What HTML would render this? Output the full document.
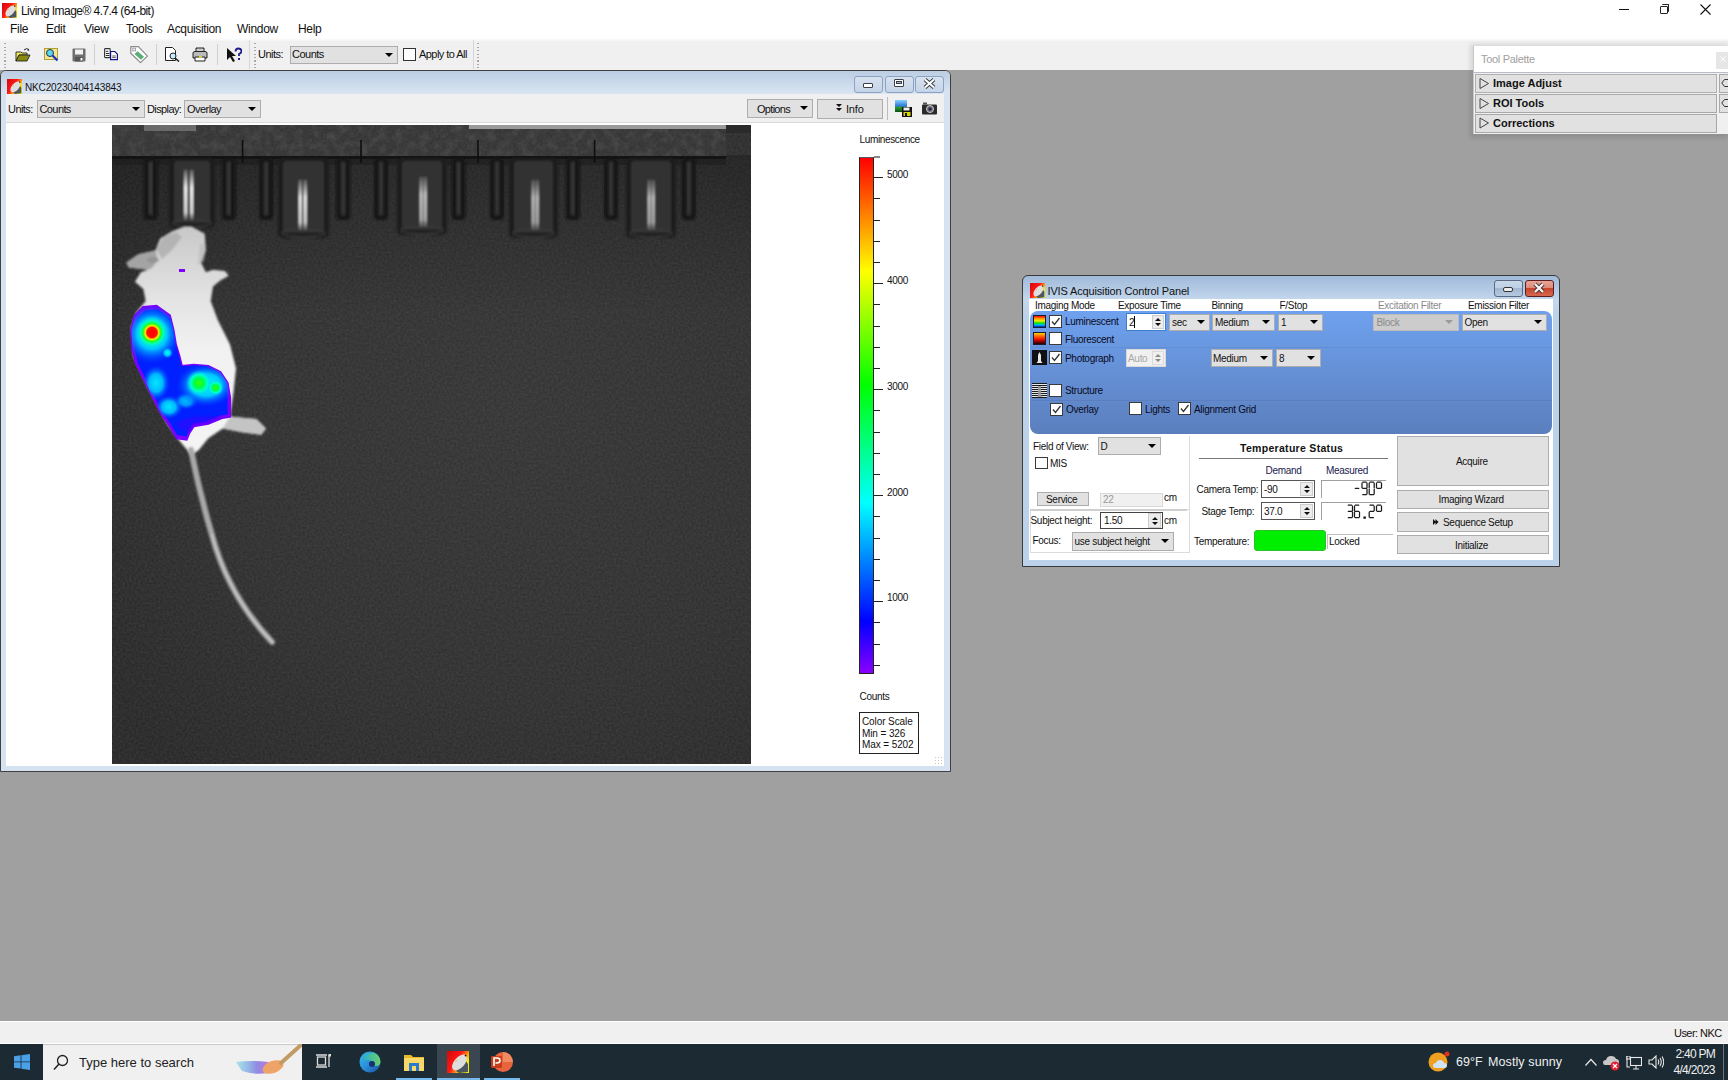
<!DOCTYPE html>
<html><head><meta charset="utf-8">
<style>
*{box-sizing:border-box;margin:0;padding:0}
html,body{width:1728px;height:1080px;overflow:hidden;background:#a0a0a0;font-family:"Liberation Sans",sans-serif;color:#000}
.a{position:absolute}
.t{position:absolute;white-space:pre;line-height:1}
.s11{font-size:11px;letter-spacing:-0.5px}
.s10{font-size:10px;letter-spacing:-0.3px}
.cb{position:absolute;background:#e1e1e1;border:1px solid #adadad}
.arr{position:absolute;width:0;height:0;border-left:4px solid transparent;border-right:4px solid transparent;border-top:4px solid #000}
.chk{position:absolute;width:13px;height:13px;background:#fff;border:1px solid #333}
.btn{position:absolute;background:#e1e1e1;border:1px solid #adadad}
</style></head><body>
<!-- ============ MAIN TITLE + MENU ============ -->
<div class="a" style="left:0;top:0;width:1728px;height:39px;background:#fff"></div>
<div class="a" style="left:0;top:38px;width:1728px;height:4px;background:linear-gradient(#fff,#f0f0f0)"></div>
<div class="a" style="left:0;top:41px;width:1728px;height:29px;background:#f0f0f0"></div>
<!-- app icon -->
<svg width="0" height="0" style="position:absolute"><defs>
<linearGradient id="lig" x1="0" y1="0.2" x2="1" y2="0.85"><stop offset="0" stop-color="#d80c0c"/><stop offset=".4" stop-color="#ff1818"/><stop offset=".62" stop-color="#ff9010"/><stop offset=".78" stop-color="#ffee00"/><stop offset="1" stop-color="#f4f000"/></linearGradient>
<symbol id="liicon" viewBox="0 0 22 22"><rect width="22" height="22" fill="url(#lig)"/><path d="M9 20 L19 10 L21 13 L21 21 L12 22Z" fill="#4e5660"/><ellipse cx="12.5" cy="11.5" rx="9.5" ry="5.2" transform="rotate(-48 12.5 11.5)" fill="#dedede"/><circle cx="18.6" cy="4.6" r="0.9" fill="#111"/><circle cx="9" cy="9.5" r="1.3" fill="#e8c890"/></symbol>
</defs></svg>
<svg class="a" style="left:2px;top:3px" width="15" height="15"><use href="#liicon"/></svg>
<div class="t" style="left:21px;top:5px;font-size:12px;letter-spacing:-0.55px;color:#111">Living Image® 4.7.4 (64-bit)</div>
<!-- window controls -->
<div class="a" style="left:1619px;top:9px;width:10px;height:1px;background:#111"></div>
<div class="a" style="left:1660px;top:6px;width:8px;height:8px;border:1px solid #222;border-radius:1px"></div>
<div class="a" style="left:1662px;top:4px;width:7px;height:8px;border-top:1px solid #222;border-right:1px solid #222;border-radius:1px"></div>
<svg class="a" style="left:1700px;top:4px" width="11" height="11"><path d="M0.5 0.5L10.5 10.5M10.5 0.5L0.5 10.5" stroke="#111" stroke-width="1.1"/></svg>
<!-- menu -->
<div class="t" style="left:10px;top:23px;font-size:12px;letter-spacing:-0.3px;color:#111">File</div>
<div class="t" style="left:46px;top:23px;font-size:12px;letter-spacing:-0.3px;color:#111">Edit</div>
<div class="t" style="left:84px;top:23px;font-size:12px;letter-spacing:-0.3px;color:#111">View</div>
<div class="t" style="left:126px;top:23px;font-size:12px;letter-spacing:-0.3px;color:#111">Tools</div>
<div class="t" style="left:167px;top:23px;font-size:12px;letter-spacing:-0.35px;color:#111">Acquisition</div>
<div class="t" style="left:237px;top:23px;font-size:12px;letter-spacing:-0.3px;color:#111">Window</div>
<div class="t" style="left:298px;top:23px;font-size:12px;letter-spacing:-0.3px;color:#111">Help</div>
<!-- toolbar grip -->
<div class="a" style="left:4px;top:43px;width:2px;height:25px;background:repeating-linear-gradient(#a8a8a8 0 1px,transparent 1px 3.5px)"></div>
<div class="a" style="left:254px;top:43px;width:2px;height:25px;background:repeating-linear-gradient(#a8a8a8 0 1px,transparent 1px 3.5px)"></div>
<div class="a" style="left:477px;top:43px;width:2px;height:25px;background:repeating-linear-gradient(#a8a8a8 0 1px,transparent 1px 3.5px)"></div>
<!-- separators -->
<div class="a" style="left:94px;top:44px;width:1px;height:21px;background:#d0d0d0"></div>
<div class="a" style="left:156px;top:44px;width:1px;height:21px;background:#d0d0d0"></div>
<div class="a" style="left:217px;top:44px;width:1px;height:21px;background:#d0d0d0"></div>
<div class="a" style="left:249px;top:40px;width:1px;height:29px;background:#d6d6d6"></div>
<div class="a" style="left:473px;top:40px;width:1px;height:29px;background:#d6d6d6"></div>
<!-- toolbar icons -->
<svg class="a" style="left:15px;top:47px" width="16" height="16" viewBox="0 0 16 16">
<path d="M1 5h5l1 1h5v2H4L1 14z" fill="#f2ec5a" stroke="#222" stroke-width=".9"/><path d="M1 14l3-6h11l-3 6z" fill="#8a8a10" stroke="#222" stroke-width=".9"/><path d="M9 3q3-3 5 0" fill="none" stroke="#222" stroke-width="1"/><path d="M13.5 1.5l.8 2-2 .2z" fill="#222"/></svg>
<svg class="a" style="left:44px;top:47px" width="15" height="15" viewBox="0 0 15 15">
<rect x=".5" y="1.5" width="13" height="11" fill="#f4e59a" stroke="#b0a030"/><circle cx="6" cy="6" r="3.5" fill="#5bd6f0" stroke="#234" stroke-width="1"/><path d="M8.5 8.5l5 5" stroke="#1535c8" stroke-width="2.2"/></svg>
<svg class="a" style="left:72px;top:48px" width="14" height="14" viewBox="0 0 14 14">
<rect x=".5" y=".5" width="13" height="13" rx="1" fill="#6e6e6e"/><rect x="3" y="1.5" width="8" height="5" fill="#f2f2f2"/><rect x="3" y="9" width="8" height="4.5" fill="#555"/><rect x="8.5" y="10" width="2" height="2.5" fill="#fff"/></svg>
<svg class="a" style="left:103px;top:47px" width="16" height="15" viewBox="103 47 16 15"><rect x="104.6" y="48.6" width="5.6" height="9" rx=".8" fill="#fff" stroke="#333" stroke-width="1.1"/><path d="M105.8 51.3h2.5M105.8 53.5h3.5M105.8 55.5h3.5" stroke="#111" stroke-width=".9"/><path d="M110.6 51.5h4.2l2.6 2.7v5.5h-6.8z" fill="#fff" stroke="#10108a" stroke-width="1.2"/><path d="M112.2 56h3.6M112.2 57.6h3.6" stroke="#333" stroke-width=".8"/></svg>
<svg class="a" style="left:129px;top:45px" width="20" height="19" viewBox="129 45 20 19"><path d="M130.8 46.6h7.6l9 9.5-6.9 6.5-9.7-9.3z" fill="#fff" stroke="#8a8a8a" stroke-width="1.2" stroke-linejoin="round"/><rect x="132.8" y="48.2" width="2.8" height="2.6" fill="none" stroke="#999" stroke-width=".9"/><path d="M137.6 51.2l6.4 5.6-3 3-6.5-5.7z" fill="#5aae78"/></svg>
<svg class="a" style="left:165px;top:47px" width="16" height="15" viewBox="0 0 16 15">
<path d="M.5 .5h7l3 3v10H.5z" fill="#fff" stroke="#222"/><circle cx="8" cy="9" r="3" fill="#bff0ff" stroke="#222" stroke-width="1"/><path d="M10 11l4 3.5" stroke="#222" stroke-width="1.6"/></svg>
<svg class="a" style="left:192px;top:47px" width="16" height="15" viewBox="0 0 16 15">
<path d="M4 1h8v4H4z" fill="#ccc" stroke="#222"/><path d="M1 6q0-1.5 2-1.5h10q2 0 2 1.5v5H1z" fill="#bbb" stroke="#222"/><path d="M3 10h10v4H3z" fill="#fff" stroke="#222"/><rect x="7" y="9" width="3" height="1.5" fill="#dde020"/></svg>
<svg class="a" style="left:226px;top:47px" width="16" height="16" viewBox="0 0 16 16">
<path d="M1 1v12l3-3 3 5 2-1-3-5h4z" fill="#111"/><path d="M9.5 4.5q0-3 3-3t3 2.5q0 2-2.5 3v2" fill="none" stroke="#1c1c8c" stroke-width="1.8"/><rect x="12" y="11" width="2" height="2" fill="#1c1c8c"/></svg>
<!-- units combo -->
<div class="t" style="left:258px;top:48.5px;font-size:11px;letter-spacing:-0.5px;color:#111">Units:</div>
<div class="cb" style="left:290px;top:46px;width:108px;height:18px"></div>
<div class="t" style="left:292px;top:48.5px;font-size:11px;letter-spacing:-0.5px;color:#111">Counts</div>
<div class="arr" style="left:385px;top:53px"></div>
<div class="chk" style="left:403px;top:48px"></div>
<div class="t" style="left:419px;top:48.5px;font-size:11px;letter-spacing:-0.55px;color:#111">Apply to All</div>
<!-- ============ STATUS + TASKBAR ============ -->
<div class="a" style="left:0;top:1021px;width:1728px;height:23px;background:#f0f0f0;border-top:1px solid #fff;border-bottom:1px solid #fff"></div>
<div class="t s11" style="left:1674px;top:1027.5px;font-size:11px;letter-spacing:-0.55px;color:#1a0f0f">User: NKC</div>
<div class="a" style="left:0;top:1044px;width:1728px;height:36px;background:#1b2a33"></div>
<svg class="a" style="left:14px;top:1054px" width="16" height="16" viewBox="0 0 16 16"><path d="M0 2.2L6.6 1.3V7.5H0zM7.4 1.2L16 0V7.5H7.4zM0 8.3H6.6V14.6L0 13.7zM7.4 8.3H16V16L7.4 14.8z" fill="#4aa0e6"/></svg>
<div class="a" style="left:43px;top:1044px;width:259px;height:36px;background:#f0f0f0;border-top:1px solid #c8c8c8"></div>
<svg class="a" style="left:53px;top:1054px" width="16" height="17" viewBox="0 0 16 17"><circle cx="9.5" cy="6.5" r="5" fill="none" stroke="#222" stroke-width="1.3"/><path d="M6 10L1 15.5" stroke="#222" stroke-width="1.5"/></svg>
<div class="t" style="left:79px;top:1056.4px;font-size:13px;letter-spacing:0px;color:#222">Type here to search</div>
<svg class="a" style="left:234px;top:1044px" width="68" height="36" viewBox="0 0 68 36">
<defs><linearGradient id="br" x1="0" y1="0" x2="1" y2="0"><stop offset="0" stop-color="#40c8e0" stop-opacity=".5"/><stop offset=".55" stop-color="#7a70e0"/><stop offset="1" stop-color="#c050d8"/></linearGradient></defs>
<path d="M2 18 Q18 16 34 18 L40 28 Q22 32 8 27Z" fill="url(#br)" opacity=".8"/>
<ellipse cx="39" cy="23" rx="11" ry="6" transform="rotate(-20 39 23)" fill="#eea466"/>
<path d="M47 19 L67 1" stroke="#c29a64" stroke-width="4" stroke-linecap="round"/>
</svg>
<!-- task view -->
<svg class="a" style="left:316px;top:1054px" width="16" height="14" viewBox="0 0 16 14"><rect x="1.5" y="3" width="8" height="8" fill="none" stroke="#ddd" stroke-width="1.3"/><path d="M0 1h11M0 13h11M13 1v12" stroke="#ddd" stroke-width="1.3"/><rect x="12.5" y="0" width="2.5" height="2.5" fill="#ddd"/></svg>
<!-- edge -->
<svg class="a" style="left:359px;top:1051px" width="22" height="22" viewBox="0 0 22 22">
<defs><linearGradient id="ed1" x1="0" y1="0" x2="1" y2="1"><stop offset="0" stop-color="#34c0e8"/><stop offset=".5" stop-color="#2a8fd8"/><stop offset="1" stop-color="#1a4fa0"/></linearGradient><linearGradient id="ed2" x1="0" y1="0" x2="1" y2="0"><stop offset="0" stop-color="#2ab0c8"/><stop offset="1" stop-color="#6ad06a"/></linearGradient></defs>
<circle cx="11" cy="11" r="10.5" fill="url(#ed1)"/><path d="M4 8Q8 1 15 2Q21 4 21.5 11Q21 15 17 15Q13 15 13 12Q13 9 9 9Q5 9 4 8Z" fill="url(#ed2)"/><circle cx="13" cy="13" r="3" fill="#1a3070"/></svg>
<!-- explorer -->
<svg class="a" style="left:404px;top:1054px" width="20" height="17" viewBox="0 0 20 17"><path d="M0 1h7l2 2h11v14H0z" fill="#e8b830"/><rect x="0" y="4" width="20" height="13" fill="#f8d868"/><path d="M5 9h10v8h-3v-5H8v5H5z" fill="#2a7ad0"/></svg>
<!-- living image active -->
<div class="a" style="left:437px;top:1044px;width:43px;height:36px;background:#3a4750"></div>
<svg class="a" style="left:447px;top:1051px" width="22" height="22"><use href="#liicon"/></svg>
<!-- powerpoint -->
<svg class="a" style="left:491px;top:1051px" width="22" height="22" viewBox="0 0 22 22"><circle cx="12" cy="11" r="10" fill="#e8643c"/><path d="M12 1A10 10 0 0 1 22 11H12z" fill="#f08a60"/><rect x="0" y="5" width="11" height="12" rx="1" fill="#c43e1c"/><path d="M3 15V7h3q3 0 3 2.5T6 12H4.5" fill="none" stroke="#fff" stroke-width="1.6"/></svg>
<div class="a" style="left:396px;top:1078px;width:36px;height:2px;background:#76b9ed"></div>
<div class="a" style="left:437px;top:1078px;width:43px;height:2px;background:#76b9ed"></div>
<div class="a" style="left:484px;top:1078px;width:36px;height:2px;background:#76b9ed"></div>
<!-- tray -->
<svg class="a" style="left:1428px;top:1051px" width="23" height="21" viewBox="0 0 23 21"><circle cx="10" cy="11" r="9.5" fill="#f0a020"/><circle cx="19" cy="3" r="2.5" fill="#e03020"/><path d="M8 17q-3 0-3-2.5t3-2.5q1-3 4-3t4 3q3 0 3 2.5T16 17z" fill="#d0e4f8"/></svg>
<div class="t" style="left:1456px;top:1056px;font-size:12.5px;letter-spacing:0px;color:#f0f0f0">69°F</div>
<div class="t" style="left:1488px;top:1056px;font-size:12.5px;letter-spacing:0.1px;color:#f0f0f0">Mostly sunny</div>
<svg class="a" style="left:1585px;top:1058px" width="12" height="8"><path d="M0.5 7.5L6 1.5 11.5 7.5" fill="none" stroke="#e8e8e8" stroke-width="1.2"/></svg>
<svg class="a" style="left:1603px;top:1054px" width="18" height="17" viewBox="0 0 18 17"><path d="M2 11q-2 0-2-2.5T3 6q1-4 5-4t5 3q3 0 3 3t-3 3z" fill="#c8c8c8"/><circle cx="12" cy="12" r="4.5" fill="#e02030"/><path d="M10 10l4 4M14 10l-4 4" stroke="#fff" stroke-width="1.2"/></svg>
<svg class="a" style="left:1626px;top:1056px" width="16" height="14" viewBox="0 0 16 14"><rect x="4.5" y="1.5" width="11" height="8" fill="none" stroke="#e8e8e8" stroke-width="1.1"/><path d="M10 10v2.5M7 13h6M1 0v11h3" fill="none" stroke="#e8e8e8" stroke-width="1.1"/><rect x="0" y="0" width="4" height="3" fill="none" stroke="#e8e8e8" stroke-width="1"/></svg>
<svg class="a" style="left:1648px;top:1055px" width="16" height="14" viewBox="0 0 16 14"><path d="M1 5h3l4-4v12l-4-4H1z" fill="none" stroke="#e8e8e8" stroke-width="1.1"/><path d="M10 4.5q1.5 2.5 0 5M12 3q2.5 4 0 8M14 1.5q3.5 5.5 0 11" fill="none" stroke="#e8e8e8" stroke-width="1.1"/></svg>
<div class="t" style="left:1675.5px;top:1048px;font-size:12px;letter-spacing:-0.75px;color:#f0f0f0">2:40 PM</div>
<div class="t" style="left:1673.5px;top:1063.6px;font-size:12px;letter-spacing:-0.7px;color:#f0f0f0">4/4/2023</div>
<div class="a" style="left:1723px;top:1044px;width:1px;height:36px;background:#6a747a"></div>
<!-- ============ IMAGE WINDOW ============ -->
<div class="a" style="left:0;top:70px;width:951px;height:702px;background:#d5e2f1;border:1px solid #404040;border-radius:6px 6px 0 0"></div>
<div class="a" style="left:1px;top:71px;width:949px;height:23px;border-radius:5px 5px 0 0;background:linear-gradient(#bccde3,#d9e5f2)"></div>
<svg class="a" style="left:7px;top:79px" width="15" height="15"><use href="#liicon"/></svg>
<div class="t" style="left:25px;top:82.8px;font-size:10px;letter-spacing:-0.15px;color:#111">NKC20230404143843</div>
<!-- caption buttons -->
<div class="a" style="left:854px;top:76px;width:29px;height:17px;border:1px solid #8da2c2;border-radius:3px;background:linear-gradient(#d7e2ef,#c5d4e8)"></div>
<div class="a" style="left:863px;top:83px;width:10px;height:5px;background:#fff;border:1px solid #3a3f48;border-radius:1px"></div>
<div class="a" style="left:885px;top:76px;width:29px;height:17px;border:1px solid #8da2c2;border-radius:3px;background:linear-gradient(#d7e2ef,#c5d4e8)"></div>
<div class="a" style="left:894px;top:79px;width:10px;height:8px;background:#fff;border:1px solid #3a3f48;border-radius:1px"></div>
<div class="a" style="left:896px;top:81px;width:6px;height:3px;background:#aab;border:1px solid #3a3f48"></div>
<div class="a" style="left:915px;top:76px;width:29px;height:17px;border:1px solid #8da2c2;border-radius:3px;background:linear-gradient(#d7e2ef,#c5d4e8)"></div>
<svg class="a" style="left:923px;top:78px" width="13" height="11"><path d="M2 1.5L11 9.5M11 1.5L2 9.5" stroke="#3a3f48" stroke-width="4"/><path d="M2 1.5L11 9.5M11 1.5L2 9.5" stroke="#fff" stroke-width="2"/></svg>
<!-- client -->
<div class="a" style="left:6px;top:94px;width:938px;height:672px;background:#fff"></div>
<div class="a" style="left:6px;top:94px;width:938px;height:29px;background:#f0f0f0;border-bottom:1px solid #dadada"></div>
<div class="t" style="left:8px;top:103.8px;font-size:11px;letter-spacing:-0.55px;color:#111">Units:</div>
<div class="cb" style="left:37px;top:100px;width:108px;height:18px"></div>
<div class="t" style="left:39.5px;top:103.8px;font-size:11px;letter-spacing:-0.6px;color:#111">Counts</div>
<div class="arr" style="left:132px;top:107px"></div>
<div class="t" style="left:147px;top:103.8px;font-size:11px;letter-spacing:-0.6px;color:#111">Display:</div>
<div class="cb" style="left:184px;top:100px;width:77px;height:18px"></div>
<div class="t" style="left:187px;top:103.8px;font-size:11px;letter-spacing:-0.55px;color:#111">Overlay</div>
<div class="arr" style="left:248px;top:107px"></div>
<div class="btn" style="left:747px;top:99px;width:66px;height:19px"></div>
<div class="t" style="left:757px;top:103.8px;font-size:11px;letter-spacing:-0.7px;color:#111">Options</div>
<div class="arr" style="left:800px;top:106px"></div>
<div class="btn" style="left:817px;top:99px;width:66px;height:20px"></div>
<svg class="a" style="left:836px;top:104px" width="6" height="9"><path d="M0 0h6L3 3zM0 4h6L3 7z" fill="#111"/></svg>
<div class="t" style="left:846px;top:103.8px;font-size:11px;letter-spacing:-0.2px;color:#111">Info</div>
<div class="a" style="left:887px;top:97px;width:1px;height:23px;background:#bbb"></div>
<svg class="a" style="left:895px;top:100px" width="18" height="18" viewBox="0 0 18 18">
<defs><linearGradient id="sky" x1="0" y1="0" x2="0" y2="1"><stop offset="0" stop-color="#8ad0ff"/><stop offset=".5" stop-color="#2a7ad8"/><stop offset=".6" stop-color="#2a9a30"/><stop offset="1" stop-color="#0c5010"/></linearGradient></defs>
<rect x="0" y="0" width="12" height="12" fill="url(#sky)"/><rect x="7" y="7" width="10" height="10" fill="#111"/><rect x="8.5" y="7.5" width="6" height="3" fill="#eee"/><rect x="8.5" y="12" width="7" height="4" fill="#d8d800"/><rect x="10" y="13" width="2" height="3" fill="#111"/></svg>
<svg class="a" style="left:922px;top:102px" width="16" height="13" viewBox="0 0 16 13">
<rect x="0" y="2.5" width="15" height="10" rx="1" fill="#2a2a2a"/><rect x="1" y="0.5" width="4" height="2" fill="#555"/><circle cx="8" cy="7" r="3.5" fill="#667" stroke="#ccc" stroke-width="1"/><circle cx="8" cy="7" r="1.5" fill="#224"/></svg>
<!-- resize grip -->
<div class="a" style="left:934px;top:756px;width:9px;height:9px;background:radial-gradient(circle,#c8c8b8 0.8px,transparent 1px) 0 0/3px 3px"></div>
<!-- IMAGE -->
<svg class="a" style="left:112px;top:125px" width="639" height="639" viewBox="0 0 639 639">
<defs>
<radialGradient id="bgg" cx="0.62" cy="0.45" r="0.75"><stop offset="0" stop-color="#2f2f2f"/><stop offset=".6" stop-color="#2a2a2a"/><stop offset="1" stop-color="#222"/></radialGradient>
<filter id="nz" x="0" y="0" width="100%" height="100%"><feTurbulence type="fractalNoise" baseFrequency="0.45" numOctaves="1" seed="3"/><feColorMatrix values="0 0 0 0 0.55  0 0 0 0 0.55  0 0 0 0 0.55  0 0 0 0.16 0"/></filter>
<filter id="bl1" x="-10%" y="-10%" width="120%" height="120%"><feGaussianBlur stdDeviation="0.8"/></filter>
<filter id="bl2" x="-20%" y="-20%" width="140%" height="140%"><feGaussianBlur stdDeviation="0.9"/></filter>
<linearGradient id="topdark" x1="0" y1="0" x2="0" y2="1"><stop offset="0" stop-color="#000" stop-opacity=".22"/><stop offset="1" stop-color="#000" stop-opacity="0"/></linearGradient><linearGradient id="peg" x1="0" y1="0" x2="1" y2="0"><stop offset="0" stop-color="#151515"/><stop offset=".35" stop-color="#333"/><stop offset=".5" stop-color="#555"/><stop offset=".65" stop-color="#303030"/><stop offset="1" stop-color="#141414"/></linearGradient>
<linearGradient id="cyl" x1="0" y1="0" x2="1" y2="0"><stop offset="0" stop-color="#1c1c1c"/><stop offset=".2" stop-color="#2a2a2a"/><stop offset=".38" stop-color="#3a3a3a"/><stop offset=".46" stop-color="#c8c8c8"/><stop offset=".52" stop-color="#e0e0e0"/><stop offset=".58" stop-color="#555"/><stop offset=".75" stop-color="#2c2c2c"/><stop offset="1" stop-color="#1a1a1a"/></linearGradient>
<linearGradient id="hl" x1="0" y1="0" x2="0" y2="1"><stop offset="0" stop-color="#fff" stop-opacity=".25"/><stop offset=".35" stop-color="#fff" stop-opacity="1"/><stop offset=".85" stop-color="#fff" stop-opacity=".85"/><stop offset="1" stop-color="#fff" stop-opacity=".15"/></linearGradient><filter id="bl3" x="-80%" y="-10%" width="260%" height="120%"><feGaussianBlur stdDeviation="0.75"/></filter><linearGradient id="cyl2" x1="0" y1="0" x2="1" y2="0"><stop offset="0" stop-color="#1e1e1e"/><stop offset=".3" stop-color="#333"/><stop offset=".45" stop-color="#777"/><stop offset=".52" stop-color="#aaa"/><stop offset=".6" stop-color="#444"/><stop offset="1" stop-color="#1c1c1c"/></linearGradient>
<radialGradient id="hot1" cx="0.5" cy="0.5" r="0.5"><stop offset="0" stop-color="#ff0000"/><stop offset=".22" stop-color="#ff2000"/><stop offset=".3" stop-color="#f0f000"/><stop offset=".42" stop-color="#00ff30"/><stop offset=".55" stop-color="#00ffd0"/><stop offset=".72" stop-color="#00a0ff"/><stop offset="1" stop-color="#0040ff" stop-opacity="0"/></radialGradient>
<radialGradient id="hot2" cx="0.5" cy="0.5" r="0.5"><stop offset="0" stop-color="#40ff00"/><stop offset=".3" stop-color="#00ff60"/><stop offset=".55" stop-color="#00f0ff"/><stop offset="1" stop-color="#0060ff" stop-opacity="0"/></radialGradient>
<radialGradient id="cy" cx="0.5" cy="0.5" r="0.5"><stop offset="0" stop-color="#00f0ff"/><stop offset="1" stop-color="#0060ff" stop-opacity="0"/></radialGradient>
</defs>
<rect width="639" height="639" fill="url(#bgg)"/>
<rect width="639" height="639" filter="url(#nz)"/>
<rect x="0" y="30" width="639" height="160" fill="url(#topdark)"/>
<!-- rack -->
<filter id="nz2" x="0" y="0" width="100%" height="100%"><feTurbulence type="fractalNoise" baseFrequency="0.12" numOctaves="2" seed="7"/><feColorMatrix values="0 0 0 0 0.6  0 0 0 0 0.6  0 0 0 0 0.6  0 0 0 0.9 -0.35"/></filter>
<rect x="0" y="0" width="614" height="32" fill="#303030"/>
<rect x="0" y="0" width="614" height="32" filter="url(#nz2)" opacity=".25"/>
<rect x="0" y="0" width="614" height="32" filter="url(#nz)" opacity=".8"/>
<rect x="32" y="0" width="52" height="6" fill="#8a8a8a" opacity=".6"/>
<rect x="357" y="0" width="257" height="4" fill="#9a9a9a"/>
<rect x="614" y="0" width="25" height="8" fill="#2a2a2a"/>
<rect x="0" y="31" width="614" height="3" fill="#141414"/>
<rect x="0" y="34" width="614" height="6" fill="#1a1a1a" opacity=".5"/>
<path d="M130.6 15v23M249 15v23M366 15v23M482.6 15v23" stroke="#0e0e0e" stroke-width="1.6"/>
<g filter="url(#bl2)"><rect x="31.6" y="33" width="14" height="62" rx="4" fill="#161616"/><rect x="36.1" y="36" width="5" height="55" rx="2" fill="#2c2c2c"/><rect x="37.9" y="38" width="1.4" height="50" fill="#3c3c3c"/><rect x="109.7" y="33" width="14" height="62" rx="4" fill="#161616"/><rect x="114.2" y="36" width="5" height="55" rx="2" fill="#2c2c2c"/><rect x="116.0" y="38" width="1.4" height="50" fill="#3c3c3c"/><rect x="147.2" y="33" width="14" height="62" rx="4" fill="#161616"/><rect x="151.7" y="36" width="5" height="55" rx="2" fill="#2c2c2c"/><rect x="153.5" y="38" width="1.4" height="50" fill="#3c3c3c"/><rect x="224.3" y="33" width="14" height="62" rx="4" fill="#161616"/><rect x="228.8" y="36" width="5" height="55" rx="2" fill="#2c2c2c"/><rect x="230.6" y="38" width="1.4" height="50" fill="#3c3c3c"/><rect x="262.0" y="33" width="14" height="62" rx="4" fill="#161616"/><rect x="266.5" y="36" width="5" height="55" rx="2" fill="#2c2c2c"/><rect x="268.3" y="38" width="1.4" height="50" fill="#3c3c3c"/><rect x="339.5" y="33" width="14" height="62" rx="4" fill="#161616"/><rect x="344.0" y="36" width="5" height="55" rx="2" fill="#2c2c2c"/><rect x="345.8" y="38" width="1.4" height="50" fill="#3c3c3c"/><rect x="378.0" y="33" width="14" height="62" rx="4" fill="#161616"/><rect x="382.5" y="36" width="5" height="55" rx="2" fill="#2c2c2c"/><rect x="384.3" y="38" width="1.4" height="50" fill="#3c3c3c"/><rect x="453.7" y="33" width="14" height="62" rx="4" fill="#161616"/><rect x="458.2" y="36" width="5" height="55" rx="2" fill="#2c2c2c"/><rect x="460.0" y="38" width="1.4" height="50" fill="#3c3c3c"/><rect x="492.0" y="33" width="14" height="62" rx="4" fill="#161616"/><rect x="496.5" y="36" width="5" height="55" rx="2" fill="#2c2c2c"/><rect x="498.3" y="38" width="1.4" height="50" fill="#3c3c3c"/><rect x="569.8" y="33" width="14" height="62" rx="4" fill="#161616"/><rect x="574.3" y="36" width="5" height="55" rx="2" fill="#2c2c2c"/><rect x="576.1" y="38" width="1.4" height="50" fill="#3c3c3c"/><rect x="57" y="33" width="46" height="70" rx="5" fill="#1e1e1e"/><rect x="62" y="36" width="36" height="62" rx="3" fill="#303030"/><ellipse cx="80.0" cy="98" rx="19.0" ry="4" fill="none" stroke="#3a3a3a" stroke-width="1.5"/><rect x="72.2" y="45" width="3" height="50" fill="url(#hl)" opacity="1" filter="url(#bl3)"/><rect x="78.2" y="45" width="3" height="50" fill="url(#hl)" opacity="1" filter="url(#bl3)"/><rect x="166" y="33" width="51" height="80" rx="5" fill="#1e1e1e"/><rect x="171" y="36" width="41" height="72" rx="3" fill="#303030"/><ellipse cx="191.5" cy="108" rx="21.5" ry="4" fill="none" stroke="#3a3a3a" stroke-width="1.5"/><rect x="186.7" y="55" width="3" height="50" fill="url(#hl)" opacity="0.95" filter="url(#bl3)"/><rect x="191.7" y="55" width="3" height="50" fill="url(#hl)" opacity="0.95" filter="url(#bl3)"/><rect x="285" y="33" width="50" height="77" rx="5" fill="#1e1e1e"/><rect x="290" y="36" width="40" height="69" rx="3" fill="#303030"/><ellipse cx="310.0" cy="105" rx="21.0" ry="4" fill="none" stroke="#3a3a3a" stroke-width="1.5"/><rect x="307.7" y="52" width="3" height="50" fill="url(#hl)" opacity="0.75" filter="url(#bl3)"/><rect x="311.7" y="52" width="3" height="50" fill="url(#hl)" opacity="0.75" filter="url(#bl3)"/><rect x="397" y="33" width="49" height="80" rx="5" fill="#1e1e1e"/><rect x="402" y="36" width="39" height="72" rx="3" fill="#303030"/><ellipse cx="421.5" cy="108" rx="20.5" ry="4" fill="none" stroke="#3a3a3a" stroke-width="1.5"/><rect x="419.7" y="55" width="3" height="50" fill="url(#hl)" opacity="0.7" filter="url(#bl3)"/><rect x="423.7" y="55" width="3" height="50" fill="url(#hl)" opacity="0.7" filter="url(#bl3)"/><rect x="514" y="33" width="50" height="80" rx="5" fill="#1e1e1e"/><rect x="519" y="36" width="40" height="72" rx="3" fill="#303030"/><ellipse cx="539.0" cy="108" rx="21.0" ry="4" fill="none" stroke="#3a3a3a" stroke-width="1.5"/><rect x="535.7" y="55" width="3" height="50" fill="url(#hl)" opacity="0.7" filter="url(#bl3)"/><rect x="539.7" y="55" width="3" height="50" fill="url(#hl)" opacity="0.7" filter="url(#bl3)"/></g>
<!-- mouse -->
<defs><linearGradient id="mb" x1="0" y1="0" x2="0" y2="1"><stop offset="0" stop-color="#c8c8c8"/><stop offset=".3" stop-color="#e2e2e2"/><stop offset=".55" stop-color="#f2f2f2"/><stop offset="1" stop-color="#f4f4f4"/></linearGradient>
<clipPath id="blobc"><path d="M19.3 205 L22.9 190.5 31.3 182.1 44.5 180.9 57.8 190.5 61.4 205 63.8 219.4 67.4 231.4 69.8 241 81.8 239.9 96.3 241 108.3 247.1 115.5 257.9 118 272.3 118 291.6 110.7 292.8 96.3 298.8 81.8 301.2 77 308.5 74.6 314.5 65 313.3 57.8 301.2 48.1 286.8 36.1 262.7 24.1 238.7 20.5 224.2Z"/></clipPath>
<radialGradient id="cyb" cx="0.5" cy="0.5" r="0.5"><stop offset="0" stop-color="#00ffff"/><stop offset=".5" stop-color="#00c8ff"/><stop offset="1" stop-color="#0040ff" stop-opacity="0"/></radialGradient></defs>
<g filter="url(#bl1)">
<path d="M79.4 101.5 L92.7 108.7 93.9 125.5 89 137.6 93.9 147.2 101 144.8 113 146 116.7 150.8 108.3 155.6 101 161.6 98.7 176 105.9 195.3 118 219.4 124 243.5 121.5 267.5 118 291.6 130 292.8 144.4 294 154 303.6 149.2 309.7 130 307.3 110.7 303.6 96.3 313.3 86.6 325.3 79.4 330 67.4 315.7 55.4 298.8 36.1 262.7 21.7 231.4 19.3 202.6 24 188 33.7 176 31.3 164 22.9 156.8 28.9 147.2 36.1 144.8 16.8 142.4 14.4 137.6 26.5 129.2 43.3 125.5 48.1 113.5 60.2 106.3 72.2 101.5Z" fill="url(#mb)"/>
<path d="M36.1 144.8 L16.8 142.4 14.4 137.6 26.5 129.2 43.3 125.5 46 135 40 143Z" fill="#a4a4a4"/>
<path d="M118 291.6 L130 292.8 144.4 294 154 303.6 149.2 309.7 130 307.3 110.7 303.6Z" fill="#c4c4c4"/>
<path d="M44 124 L52 112 64 107 70 112 60 125 50 134Z" fill="#a8a8a8" opacity=".7"/><ellipse cx="41" cy="135" rx="6" ry="3" fill="#909090" opacity=".8"/><path d="M88 118 L94 122 92 136 86 140Z" fill="#b8b8b8" opacity=".6"/>
</g>
<path d="M79 325 Q88 370 100 410 Q116 470 160 517" fill="none" stroke="#a8a8a8" stroke-width="6" stroke-linecap="round" filter="url(#bl2)"/>
<path d="M100 410 Q116 470 160 517" fill="none" stroke="#b8b8b8" stroke-width="2.5" stroke-linecap="round"/>
<!-- luminescence overlay -->
<path d="M19.3 205 L22.9 190.5 31.3 182.1 44.5 180.9 57.8 190.5 61.4 205 63.8 219.4 67.4 231.4 69.8 241 81.8 239.9 96.3 241 108.3 247.1 115.5 257.9 118 272.3 118 291.6 110.7 292.8 96.3 298.8 81.8 301.2 77 308.5 74.6 314.5 65 313.3 57.8 301.2 48.1 286.8 36.1 262.7 24.1 238.7 20.5 224.2Z" fill="#7a00ff" stroke="#7a00ff" stroke-width="2.2"/>
<g clip-path="url(#blobc)">
<path d="M19.3 205 L22.9 190.5 31.3 182.1 44.5 180.9 57.8 190.5 61.4 205 63.8 219.4 67.4 231.4 69.8 241 81.8 239.9 96.3 241 108.3 247.1 115.5 257.9 118 272.3 118 291.6 110.7 292.8 96.3 298.8 81.8 301.2 77 308.5 74.6 314.5 65 313.3 57.8 301.2 48.1 286.8 36.1 262.7 24.1 238.7 20.5 224.2Z" fill="#0020ff" transform="translate(69 248) scale(.95) translate(-69 -248)"/>
<circle cx="40" cy="209" r="30" fill="url(#cyb)"/>
<circle cx="55.4" cy="227.8" r="6" fill="url(#cyb)"/>
<ellipse cx="44" cy="258" rx="14" ry="18" fill="url(#cyb)" opacity=".9"/>
<ellipse cx="57" cy="282" rx="14" ry="12" fill="url(#cyb)" opacity=".9"/>
<ellipse cx="74" cy="276" rx="12" ry="9" fill="url(#cyb)" opacity=".7"/>
<ellipse cx="94" cy="260" rx="30" ry="22" fill="url(#cyb)"/>
<ellipse cx="95" cy="300" rx="30" ry="9" fill="#4000ff" opacity=".5" filter="url(#bl1)"/>
</g>
<defs><radialGradient id="hot1b" cx="0.5" cy="0.5" r="0.5"><stop offset="0" stop-color="#ff0000"/><stop offset=".3" stop-color="#ff1000"/><stop offset=".4" stop-color="#f8f000"/><stop offset=".52" stop-color="#20ff20"/><stop offset=".68" stop-color="#00ffc0"/><stop offset="1" stop-color="#00c0ff" stop-opacity="0"/></radialGradient>
<radialGradient id="hot2b" cx="0.5" cy="0.5" r="0.5"><stop offset="0" stop-color="#40ff00"/><stop offset=".35" stop-color="#00ff40"/><stop offset=".65" stop-color="#00ffd0"/><stop offset="1" stop-color="#00c0ff" stop-opacity="0"/></radialGradient></defs>
<circle cx="40" cy="207.5" r="17" fill="url(#hot1b)"/>
<circle cx="87" cy="258" r="13" fill="url(#hot2b)"/>
<circle cx="103.5" cy="262.7" r="8" fill="url(#hot2b)"/>
<rect x="67" y="144" width="6" height="3" fill="#8000ff"/>
</svg>
<!-- colour bar -->
<div class="t" style="left:859.5px;top:134.5px;font-size:10px;letter-spacing:-0.35px;color:#111">Luminescence</div>
<div class="a" style="left:859px;top:157px;width:15px;height:517px;border:1px solid #222;border-top-color:#556;background:linear-gradient(#ff0000 0%,#ff8000 11%,#ffff00 22%,#00ff00 44%,#00ffff 67%,#0000ff 90%,#8a00ff 100%)"></div>
<div class="a" style="left:874px;top:156px;width:6px;height:2px;background:#888"></div>
<div class="a" style="left:874px;top:177px;width:9px;height:1px;background:#222"></div>
<div class="t" style="left:887px;top:169.5px;font-size:10px;letter-spacing:-0.35px;color:#111">5000</div>
<div class="a" style="left:874px;top:198px;width:6px;height:1px;background:#222"></div>
<div class="a" style="left:874px;top:220px;width:6px;height:1px;background:#222"></div>
<div class="a" style="left:874px;top:241px;width:6px;height:1px;background:#222"></div>
<div class="a" style="left:874px;top:262px;width:6px;height:1px;background:#222"></div>
<div class="a" style="left:874px;top:283px;width:9px;height:1px;background:#222"></div>
<div class="t" style="left:887px;top:275.5px;font-size:10px;letter-spacing:-0.35px;color:#111">4000</div>
<div class="a" style="left:874px;top:304px;width:6px;height:1px;background:#222"></div>
<div class="a" style="left:874px;top:326px;width:6px;height:1px;background:#222"></div>
<div class="a" style="left:874px;top:347px;width:6px;height:1px;background:#222"></div>
<div class="a" style="left:874px;top:368px;width:6px;height:1px;background:#222"></div>
<div class="a" style="left:874px;top:389px;width:9px;height:1px;background:#222"></div>
<div class="t" style="left:887px;top:381.5px;font-size:10px;letter-spacing:-0.35px;color:#111">3000</div>
<div class="a" style="left:874px;top:410px;width:6px;height:1px;background:#222"></div>
<div class="a" style="left:874px;top:432px;width:6px;height:1px;background:#222"></div>
<div class="a" style="left:874px;top:453px;width:6px;height:1px;background:#222"></div>
<div class="a" style="left:874px;top:474px;width:6px;height:1px;background:#222"></div>
<div class="a" style="left:874px;top:495px;width:9px;height:1px;background:#222"></div>
<div class="t" style="left:887px;top:487.5px;font-size:10px;letter-spacing:-0.35px;color:#111">2000</div>
<div class="a" style="left:874px;top:516px;width:6px;height:1px;background:#222"></div>
<div class="a" style="left:874px;top:538px;width:6px;height:1px;background:#222"></div>
<div class="a" style="left:874px;top:559px;width:6px;height:1px;background:#222"></div>
<div class="a" style="left:874px;top:580px;width:6px;height:1px;background:#222"></div>
<div class="a" style="left:874px;top:601px;width:9px;height:1px;background:#222"></div>
<div class="t" style="left:887px;top:593.4px;font-size:10px;letter-spacing:-0.35px;color:#111">1000</div>
<div class="a" style="left:874px;top:622px;width:6px;height:1px;background:#222"></div>
<div class="a" style="left:874px;top:644px;width:6px;height:1px;background:#222"></div>
<div class="a" style="left:874px;top:665px;width:6px;height:1px;background:#222"></div>
<div class="t" style="left:859.5px;top:691.5px;font-size:10px;letter-spacing:-0.3px;color:#111">Counts</div>
<div class="a" style="left:859px;top:712px;width:60px;height:42px;border:1px solid #222;background:#fff"></div>
<div class="t" style="left:862px;top:715.8px;font-size:10px;letter-spacing:-0.1px;line-height:11.7px;color:#111">Color Scale
Min = 326
Max = 5202</div>
<!-- ============ TOOL PALETTE ============ -->
<div class="a" style="left:1470px;top:44px;width:258px;height:94px;background:rgba(0,0,0,.10);filter:blur(2px)"></div>
<div class="a" style="left:1473px;top:46px;width:255px;height:88px;background:#f0f0f0;border-left:1px solid #c8c8c8"></div>
<div class="a" style="left:1474px;top:46px;width:254px;height:27px;background:#fff;border-bottom:1px solid #b8bcc4"></div>
<div class="t" style="left:1481px;top:54px;font-size:11px;letter-spacing:-0.3px;color:#a0a0a0">Tool Palette</div>
<div class="a" style="left:1716px;top:52px;width:12px;height:17px;background:#e6e6e6"></div>
<div class="a" style="left:1475px;top:74px;width:242px;height:19px;background:#e1e1e1;border:1px solid #b0b0b0"></div>
<div class="a" style="left:1475px;top:94px;width:242px;height:19px;background:#e1e1e1;border:1px solid #a8a8a8"></div>
<div class="a" style="left:1475px;top:114px;width:242px;height:19px;background:#e1e1e1;border:1px solid #a8a8a8"></div>
<div class="a" style="left:1719px;top:74px;width:9px;height:19px;background:#e1e1e1;border:1px solid #a8a8a8;border-right:none"></div>
<div class="a" style="left:1719px;top:94px;width:9px;height:19px;background:#e1e1e1;border:1px solid #a8a8a8;border-right:none"></div>
<svg class="a" style="left:1479px;top:77px" width="11" height="52"><path d="M1 1.5L9.5 6.5 1 11.5Z M1 21.5L9.5 26.5 1 31.5Z M1 41L9.5 46 1 51Z" fill="none" stroke="#444" stroke-width="1"/></svg>
<svg class="a" style="left:1721px;top:78px" width="7" height="34"><path d="M7 1.5H3.5L0.8 5 3.5 8.5H7M7 21.5H3.5L0.8 25 3.5 28.5H7" fill="none" stroke="#333" stroke-width="1"/></svg><svg class="a" style="left:1719px;top:55px" width="9" height="9"><path d="M1.5 1.5l5 5M6.5 1.5l-5 5" stroke="#fff" stroke-width="1"/></svg>
<div class="t" style="left:1493px;top:77.7px;font-size:11px;font-weight:bold;letter-spacing:0px;color:#111">Image Adjust</div>
<div class="t" style="left:1493px;top:97.8px;font-size:11px;font-weight:bold;letter-spacing:0px;color:#111">ROI Tools</div>
<div class="t" style="left:1493px;top:117.5px;font-size:11px;font-weight:bold;letter-spacing:0px;color:#111">Corrections</div>
<!-- ============ IVIS PANEL ============ -->
<div class="a" style="left:1022px;top:275px;width:538px;height:292px;border:1px solid #3a3a3a;border-radius:6px 6px 0 0;background:linear-gradient(#a0bad9 0px,#c4d7ed 24px,#bcd2ea 40px,#bcd2ea 100%)"></div>
<svg class="a" style="left:1030px;top:283px" width="15" height="15"><use href="#liicon"/></svg>
<div class="t" style="left:1047.5px;top:286.4px;font-size:11px;letter-spacing:-0.15px;color:#111">IVIS Acquisition Control Panel</div>
<div class="a" style="left:1494px;top:280px;width:29px;height:17px;border:1px solid #5a6a80;border-radius:3px;background:linear-gradient(#c9d8ea 0,#bdd0e6 45%,#9fb6d2 46%,#b6c9df 100%)"></div>
<div class="a" style="left:1503px;top:287px;width:10px;height:5px;background:#eee;border:1px solid #333;border-radius:2px"></div>
<div class="a" style="left:1525px;top:280px;width:29px;height:17px;border:1px solid #5a1e1e;border-radius:3px;background:linear-gradient(#eaa597 0,#de8a78 45%,#c6432a 46%,#d5684f 100%)"></div>
<svg class="a" style="left:1532px;top:282px" width="14" height="12"><path d="M3 2L11 10M11 2L3 10" stroke="#4a3030" stroke-width="4.2"/><path d="M3 2L11 10M11 2L3 10" stroke="#f4f4f4" stroke-width="2.4"/></svg>
<div class="a" style="left:1029px;top:299px;width:524px;height:261px;background:#fff"></div>
<div class="t s10" style="left:1035px;top:300.5px;color:#111">Imaging Mode</div>
<div class="t s10" style="left:1118px;top:300.5px;color:#111">Exposure Time</div>
<div class="t s10" style="left:1211.5px;top:300.5px;color:#111">Binning</div>
<div class="t s10" style="left:1279.5px;top:300.5px;color:#111">F/Stop</div>
<div class="t s10" style="left:1378px;top:300.5px;color:#8a8a8a">Excitation Filter</div>
<div class="t s10" style="left:1468px;top:300.5px;color:#111">Emission Filter</div>
<!-- blue panel -->
<div class="a" style="left:1030px;top:311px;width:522px;height:123px;border-radius:8px;background:linear-gradient(#6fa1ee,#5b7fbd)"></div>
<div class="a" style="left:1030px;top:347px;width:522px;height:1px;background:rgba(0,0,40,.06)"></div>
<div class="a" style="left:1030px;top:400px;width:522px;height:1px;background:rgba(0,0,40,.06)"></div>
<!-- icons -->
<div class="a" style="left:1033px;top:314.5px;width:13px;height:13px;border:1px solid #1a1a30;background:linear-gradient(#ff0000,#ffa000 25%,#f0f000 45%,#00e000 65%,#00c0ff 80%,#0020c0)"></div>
<div class="a" style="left:1033px;top:331.5px;width:13px;height:13.5px;border:1px solid #1a1a30;background:linear-gradient(#ffd000,#ff2000 50%,#a00000 75%,#200000)"></div>
<svg class="a" style="left:1032px;top:349.5px" width="15" height="15" viewBox="0 0 15 15"><rect width="15" height="15" fill="#111"/><path d="M7.5 2L9 5v6l1.5 2h-6L6 11V5z" fill="#e8e8e8"/></svg>
<svg class="a" style="left:1032px;top:383px" width="15" height="15" viewBox="0 0 15 15"><rect width="15" height="15" fill="#e8e8e8"/><path d="M0 .5h15M0 2.5h15M0 4.5h15M0 6.5h15M0 8.5h15M0 10.5h15M0 12.5h15M0 14.5h15" stroke="#1a1a1a" stroke-width="1"/><path d="M6 3h3v9l1 2H5l1-2z" fill="#999" opacity=".9"/></svg>
<!-- checkboxes -->
<div class="chk" style="left:1049px;top:315px;width:13px;height:13px;border-color:#3a3a3a"></div>
<svg class="a" style="left:1050px;top:316px" width="11" height="11"><path d="M2 5.5L4.5 8.5 9.5 2" fill="none" stroke="#333" stroke-width="1.3"/></svg>
<div class="chk" style="left:1049px;top:332px;width:13px;height:13px;border-color:#3a3a3a"></div>
<div class="chk" style="left:1049px;top:351px;width:13px;height:13px;border-color:#3a3a3a"></div>
<svg class="a" style="left:1050px;top:352px" width="11" height="11"><path d="M2 5.5L4.5 8.5 9.5 2" fill="none" stroke="#333" stroke-width="1.3"/></svg>
<div class="chk" style="left:1049px;top:384px;width:13px;height:13px;border-color:#3a3a3a"></div>
<div class="chk" style="left:1050px;top:402.5px;width:13px;height:13px;border-color:#3a3a3a"></div>
<svg class="a" style="left:1051px;top:403.5px" width="11" height="11"><path d="M2 5.5L4.5 8.5 9.5 2" fill="none" stroke="#333" stroke-width="1.3"/></svg>
<div class="chk" style="left:1129px;top:401.5px;width:13px;height:13px;border-color:#3a3a3a"></div>
<div class="chk" style="left:1178px;top:401.5px;width:13px;height:13px;border-color:#3a3a3a"></div>
<svg class="a" style="left:1179px;top:402.5px" width="11" height="11"><path d="M2 5.5L4.5 8.5 9.5 2" fill="none" stroke="#333" stroke-width="1.3"/></svg>
<div class="t s10" style="left:1065px;top:316.5px;color:#0a0a20">Luminescent</div>
<div class="t s10" style="left:1065px;top:334.5px;color:#0a0a20">Fluorescent</div>
<div class="t s10" style="left:1065px;top:353.5px;color:#0a0a20">Photograph</div>
<div class="t s10" style="left:1065px;top:385.5px;color:#0a0a20">Structure</div>
<div class="t s10" style="left:1066px;top:405px;color:#0a0a20">Overlay</div>
<div class="t s10" style="left:1145px;top:404.5px;color:#0a0a20">Lights</div>
<div class="t s10" style="left:1194px;top:404.5px;color:#0a0a20">Alignment Grid</div>
<!-- row controls -->
<div class="a" style="left:1126px;top:313px;width:40px;height:18px;background:#fff;border:1px solid #3c7fd0"></div>
<div class="t s10" style="left:1129px;top:317.5px;color:#111">2</div>
<div class="a" style="left:1134px;top:316px;width:1px;height:12px;background:#000"></div>
<div class="a" style="left:1152px;top:315px;width:12px;height:14px;background:#ececec;border:1px solid #ccc"></div>
<svg class="a" style="left:1154px;top:317px" width="8" height="10"><path d="M1 4L4 1 7 4zM1 6L4 9 7 6z" fill="#111"/></svg>
<div class="cb" style="left:1169px;top:314px;width:41px;height:17px"></div>
<div class="t s10" style="left:1172px;top:317.5px;color:#111">sec</div>
<div class="arr" style="left:1197px;top:320px"></div>
<div class="cb" style="left:1212px;top:314px;width:63px;height:17px"></div>
<div class="t s10" style="left:1215px;top:317.5px;color:#111">Medium</div>
<div class="arr" style="left:1262px;top:320px"></div>
<div class="cb" style="left:1278px;top:314px;width:45px;height:17px"></div>
<div class="t s10" style="left:1281px;top:317.5px;color:#111">1</div>
<div class="arr" style="left:1310px;top:320px"></div>
<div class="cb" style="left:1373px;top:313.5px;width:86px;height:17.5px;background:#cccccc;border-color:#bcbcbc"></div>
<div class="t s10" style="left:1376.5px;top:317.5px;color:#8a8a8a">Block</div>
<div class="arr" style="left:1445px;top:320px;border-top-color:#9a9a9a"></div>
<div class="cb" style="left:1462px;top:313.5px;width:85px;height:17.5px"></div>
<div class="t s10" style="left:1464.5px;top:317.5px;color:#111">Open</div>
<div class="arr" style="left:1534px;top:320px"></div>
<div class="a" style="left:1126px;top:349px;width:40px;height:18px;background:#f0f0f0;border:1px solid #d8d8d8"></div>
<div class="t s10" style="left:1128px;top:353.8px;color:#a8a8a8">Auto</div>
<div class="a" style="left:1152px;top:351px;width:12px;height:14px;background:#f0f0f0;border:1px solid #dadada"></div>
<svg class="a" style="left:1154px;top:353px" width="8" height="10"><path d="M1 4L4 1 7 4zM1 6L4 9 7 6z" fill="#8a8a8a"/></svg>
<div class="cb" style="left:1211px;top:349px;width:62px;height:18px"></div>
<div class="t s10" style="left:1213px;top:353.8px;color:#111">Medium</div>
<div class="arr" style="left:1260px;top:356px"></div>
<div class="cb" style="left:1276px;top:349px;width:45px;height:18px"></div>
<div class="t s10" style="left:1279px;top:353.8px;color:#111">8</div>
<div class="arr" style="left:1307px;top:356px"></div>
<!-- lower left -->
<div class="t s10" style="left:1033px;top:441.6px;color:#111">Field of View:</div>
<div class="cb" style="left:1098px;top:437px;width:63px;height:18px"></div>
<div class="t s10" style="left:1100.5px;top:441.6px;color:#111">D</div>
<div class="arr" style="left:1148px;top:444px"></div>
<div class="a" style="left:1189px;top:436px;width:1px;height:117px;background:#dcdcdc"></div>
<div class="chk" style="left:1035px;top:457px;width:13px;height:12px;border-color:#3a3a3a"></div>
<div class="t s10" style="left:1050px;top:458.6px;color:#111">MIS</div>
<div class="btn" style="left:1037px;top:492px;width:52px;height:14px"></div>
<div class="t s10" style="left:1046px;top:494.6px;color:#111">Service</div>
<div class="a" style="left:1100px;top:493px;width:63px;height:14px;background:#f0f0f0;border:1px solid #dadada"></div>
<div class="t s10" style="left:1103px;top:494.6px;color:#999">22</div>
<div class="t s10" style="left:1164px;top:492.7px;color:#111">cm</div>
<div class="a" style="left:1030px;top:509px;width:160px;height:44px;border:1px solid #dcdcdc;border-right:none"></div><div class="a" style="left:1030px;top:508.5px;width:157px;height:2px;background:#cfcfcf"></div>
<div class="t s10" style="left:1030.5px;top:516.4px;color:#111">Subject height:</div>
<div class="a" style="left:1100px;top:512px;width:63px;height:17px;background:#fff;border:1px solid #444"></div>
<div class="t s10" style="left:1104px;top:516.4px;color:#111">1.50</div>
<div class="a" style="left:1148px;top:513px;width:13px;height:15px;background:#ececec;border:1px solid #ccc"></div>
<svg class="a" style="left:1150.5px;top:515.5px" width="8" height="10"><path d="M1 4L4 1 7 4zM1 6L4 9 7 6z" fill="#111"/></svg>
<div class="t s10" style="left:1164px;top:516.4px;color:#111">cm</div>
<div class="t s10" style="left:1032.5px;top:535.6px;color:#111">Focus:</div>
<div class="cb" style="left:1072px;top:531.5px;width:102px;height:19.5px"></div>
<div class="t s10" style="left:1074.5px;top:536.6px;color:#111">use subject height</div>
<div class="arr" style="left:1161px;top:539px"></div>
<!-- temperature -->
<div class="t" style="left:1240px;top:443.2px;font-size:10.5px;font-weight:bold;letter-spacing:0.3px;color:#111">Temperature Status</div>
<div class="a" style="left:1199px;top:458px;width:189px;height:1px;background:#777"></div>
<div class="t s10" style="left:1265.5px;top:466.4px;color:#1a1a50">Demand</div>
<div class="t s10" style="left:1326px;top:466.4px;color:#1a1a50">Measured</div>
<div class="t s10" style="left:1196.5px;top:484.9px;color:#111">Camera Temp:</div>
<div class="t s10" style="left:1201.5px;top:507.2px;color:#111">Stage Temp:</div>
<div class="a" style="left:1261px;top:480px;width:54px;height:18px;background:#fff;border:1px solid #555"></div>
<div class="t s10" style="left:1264px;top:485px;color:#111">-90</div>
<div class="a" style="left:1300px;top:482px;width:13px;height:14px;background:#ececec;border:1px solid #ccc"></div>
<svg class="a" style="left:1302.5px;top:484px" width="8" height="10"><path d="M1 4L4 1 7 4zM1 6L4 9 7 6z" fill="#111"/></svg>
<div class="a" style="left:1261px;top:502px;width:54px;height:18px;background:#fff;border:1px solid #555"></div>
<div class="t s10" style="left:1264px;top:507.3px;color:#111">37.0</div>
<div class="a" style="left:1300px;top:504px;width:13px;height:14px;background:#ececec;border:1px solid #ccc"></div>
<svg class="a" style="left:1302.5px;top:506px" width="8" height="10"><path d="M1 4L4 1 7 4zM1 6L4 9 7 6z" fill="#111"/></svg>
<div class="a" style="left:1321px;top:480px;width:65px;height:18px;border-top:1px solid #a0a0a0;border-left:1px solid #a0a0a0"></div>
<div class="a" style="left:1321px;top:502px;width:65px;height:18px;border-top:1px solid #a0a0a0;border-left:1px solid #a0a0a0"></div>
<svg class="a" style="left:0;top:0;overflow:visible" width="1" height="1"><path d="M1355.3 488.4L1358.7 488.4M1362.8 482.2L1366.2 482.2M1367.0 483.0L1367.0 487.7M1367.0 489.2L1367.0 493.9M1362.8 494.7L1366.2 494.7M1362.0 483.0L1362.0 487.7M1362.8 488.4L1366.2 488.4M1370.0 482.2L1373.4 482.2M1374.2 483.0L1374.2 487.7M1374.2 489.2L1374.2 493.9M1370.0 494.7L1373.4 494.7M1369.2 489.2L1369.2 493.9M1369.2 483.0L1369.2 487.7M1377.3 482.2L1380.7 482.2M1381.5 483.0L1381.5 487.7M1376.5 483.0L1376.5 487.7M1377.3 488.4L1380.7 488.4M1348.3 505.2L1351.7 505.2M1352.5 506.0L1352.5 510.7M1352.5 512.2L1352.5 516.9M1348.3 517.7L1351.7 517.7M1348.3 511.4L1351.7 511.4M1355.3 505.2L1358.7 505.2M1359.5 512.2L1359.5 516.9M1355.3 517.7L1358.7 517.7M1354.5 512.2L1354.5 516.9M1354.5 506.0L1354.5 510.7M1355.3 511.4L1358.7 511.4M1364.0 517.2h1.3v1h-1.3zM1370.0 505.2L1373.4 505.2M1374.2 506.0L1374.2 510.7M1370.0 517.7L1373.4 517.7M1369.2 512.2L1369.2 516.9M1370.0 511.4L1373.4 511.4M1377.3 505.2L1380.7 505.2M1381.5 506.0L1381.5 510.7M1376.5 506.0L1376.5 510.7M1377.3 511.4L1380.7 511.4" stroke="#1a1a1a" stroke-width="1.25" stroke-linecap="round" fill="none"/></svg>

<div class="t s10" style="left:1194px;top:537px;color:#111">Temperature:</div>
<div class="a" style="left:1254px;top:530px;width:72px;height:20.5px;background:#00ef00;border-radius:3px;border:1px solid #2ac02a"></div>
<div class="a" style="left:1327px;top:534px;width:66px;height:15px;border-top:1px solid #c0c0c0;border-left:1px solid #c0c0c0"></div>
<div class="t s10" style="left:1329px;top:537px;color:#111">Locked</div>
<!-- buttons -->
<div class="btn" style="left:1397px;top:436px;width:152px;height:50px"></div>
<div class="t s10" style="left:1456px;top:456.7px;color:#111">Acquire</div>
<div class="btn" style="left:1397px;top:490px;width:152px;height:19px"></div>
<div class="t s10" style="left:1438.5px;top:495px;color:#111">Imaging Wizard</div>
<div class="btn" style="left:1397px;top:512px;width:152px;height:20px"></div>
<svg class="a" style="left:1432.5px;top:518.5px" width="6" height="6"><path d="M0 0L3 3 0 6zM2.5 0L5.5 3 2.5 6z" fill="#111"/></svg>
<div class="t s10" style="left:1443px;top:517.8px;color:#111">Sequence Setup</div>
<div class="btn" style="left:1397px;top:535px;width:152px;height:19px"></div>
<div class="t s10" style="left:1455px;top:541px;color:#111">Initialize</div>
</body></html>
